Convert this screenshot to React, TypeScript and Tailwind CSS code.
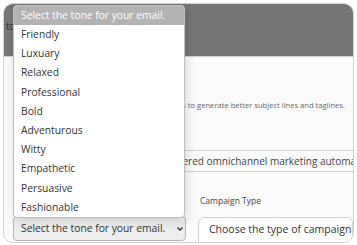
import React from "react";

const tones = [
  "Friendly",
  "Luxuary",
  "Relaxed",
  "Professional",
  "Bold",
  "Adventurous",
  "Witty",
  "Empathetic",
  "Persuasive",
  "Fashionable",
];

export default function App() {
  return (
    <div
      className="relative w-[357px] h-[245px] bg-white overflow-hidden"
      style={{ fontFamily: '"Open Sans", "Noto Sans", sans-serif' }}
    >
      <div className="ml-[3px] mt-[3px] w-[351px] h-[240px] rounded-[10px] border border-[#d4d4d4] overflow-hidden bg-[#fbfbfb] flex flex-col">
        <div className="h-[53px] shrink-0 bg-[#767676] border-b border-[#d0d0d0] pl-[2px] pt-[15px] text-[10px] text-[#333] whitespace-nowrap">
          tone settings
        </div>
        <div className="flex flex-col pl-[9px] pt-[42px]">
          <div className="flex justify-end pr-[8px] whitespace-nowrap text-[7.6px] text-[#666] leading-[12px]">
            Describe your brand in a few words to generate better subject lines and taglines.
          </div>
          <div className="mt-[39px] -mr-[30px] h-[22px] rounded-[4px] border border-[#d2d2d2] bg-[#fbfbfb] overflow-hidden whitespace-nowrap pl-[46px] text-[10px] leading-[20px] text-[#444]">
            Our company is an AI-powered omnichannel marketing automation platform
          </div>
          <div className="mt-[22px] flex gap-[12px]">
            <div className="w-[173px] shrink-0" />
            <div className="text-[8.5px] text-[#444] leading-[14px] pl-[2px]">Campaign Type</div>
          </div>
          <div className="mt-[8px] flex gap-[12px] items-start">
            <div className="w-[173px] h-[25px] shrink-0 rounded-[4px] border border-[#b8b8b8] bg-[#eeeeee] flex items-center justify-between pl-[7px] pr-[1px] text-[10.3px] text-[#333] whitespace-nowrap">
              <span>Select the tone for your email.</span>
              <svg width="8" height="6" viewBox="0 0 8 6" fill="none">
                <path d="M1.5 1.5 L4 4 L6.5 1.5" stroke="#333" strokeWidth="1.3" />
              </svg>
            </div>
            <div className="mt-[1px] flex-1 h-[30px] rounded-[6px] border border-[#cfcfcf] bg-white flex items-start pt-[4px] pl-[10px] text-[10.5px] text-[#333] whitespace-nowrap overflow-hidden">
              Choose the type of campaign
            </div>
          </div>
        </div>
      </div>

      <div className="absolute left-[13px] top-[5px] w-[172px] bg-white border border-[#bdbdbd] rounded-[4px] shadow-[2px_3px_12px_rgba(0,0,0,0.14)] overflow-hidden text-[10.3px] text-[#333]">
        <div className="h-[19px] bg-[#b3b3b3] text-white pl-[7px] leading-[19px] whitespace-nowrap">
          Select the tone for your email.
        </div>
        {tones.map((t) => (
          <div key={t} className="h-[19.2px] pl-[7px] leading-[19px] whitespace-nowrap">
            {t}
          </div>
        ))}
      </div>
    </div>
  );
}
